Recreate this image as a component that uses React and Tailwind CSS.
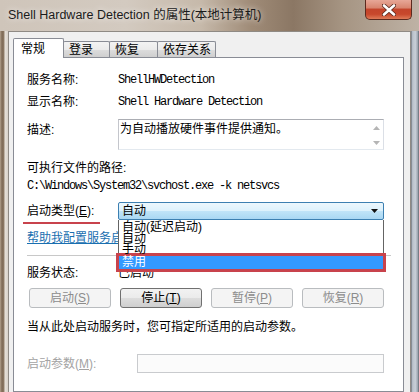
import React from "react";

const mono = "font-['Liberation_Mono',monospace] text-[12px] tracking-[-1.2px]";

const TABS = [
  { id: "general", label: "常规", w: "w-[51px]" },
  { id: "logon", label: "登录", w: "w-[47px]" },
  { id: "recovery", label: "恢复", w: "w-[49px]" },
  { id: "deps", label: "依存关系", w: "w-[59px]" },
];

const BUTTONS = [
  { label: "启动", key: "S", enabled: false },
  { label: "停止", key: "T", enabled: true },
  { label: "暂停", key: "P", enabled: false },
  { label: "恢复", key: "R", enabled: false },
];

function Tab({ tab, selected }) {
  if (selected) {
    return (
      <div className={`relative z-10 -mb-px flex h-[20px] ${tab.w} items-center rounded-t-[2px] border border-b-0 border-[#898c95] bg-white pl-[7px]`}>
        {tab.label}
      </div>
    );
  }
  return (
    <div className={`-ml-px flex h-[16px] ${tab.w} items-center rounded-t-[2px] border border-b-0 border-[#898c95] bg-[linear-gradient(#f3f3f3_0%,#ebebeb_50%,#dddddd_50%,#cfcfcf_100%)] pl-[5px]`}>
      {tab.label}
    </div>
  );
}

function Arrow({ up }) {
  return (
    <svg width="7" height="4" viewBox="0 0 7 4">
      <path d={up ? "M0 4 L3.5 0 L7 4 Z" : "M0 0 L7 0 L3.5 4 Z"} fill="#b5b5b5" />
    </svg>
  );
}

export default function App() {
  return (
    <div className="relative flex h-[392px] w-[419px] flex-col overflow-hidden bg-[#c9bdb0] font-['Liberation_Sans','Noto_Sans_CJK_SC',sans-serif] text-[12px] leading-[16px] text-black">
      {/* title bar */}
      <div className="flex h-[31px] shrink-0 items-start bg-[linear-gradient(90deg,#cfc5ba_0%,#d3cac0_30%,#c6b9aa_48%,#9f8b77_60%,#8b7764_70%,#a69583_82%,#beb2a5_100%)]">
        <div className="pl-[8px] pt-[7px] text-[12.5px] leading-[16px] text-[#1b1b1b] [text-shadow:0_0_6px_rgba(255,255,255,0.9)]">
          Shell Hardware Detection 的属性(本地计算机)
        </div>
        <div className="ml-auto mr-[7px] flex h-[20px] w-[47px] items-center justify-center rounded-b-[5px] border border-t-0 border-[#5b2a1f] bg-[linear-gradient(#e7a797_0%,#d98670_40%,#c4452b_50%,#c8482c_75%,#df7b58_100%)]">
          <svg width="14" height="12" viewBox="0 0 14 12">
            <path d="M2 1.5 L12 10.5 M12 1.5 L2 10.5" stroke="#5b2a1f" strokeWidth="4.2" strokeLinecap="round" />
            <path d="M2 1.5 L12 10.5 M12 1.5 L2 10.5" stroke="#ffffff" strokeWidth="2.6" strokeLinecap="round" />
          </svg>
        </div>
      </div>

      <div className="flex flex-1">
        {/* left frame */}
        <div className="w-[8px] bg-[linear-gradient(90deg,#b3a18c_0%,#7e6a56_25%,#8a7661_45%,#e6e0d8_65%,#d8d1c9_100%)]" />

        {/* client */}
        <div className="flex flex-1 flex-col border-x border-t border-[#8f8a84] bg-[#f0f0f0] pt-[6px]">
          <div className="ml-[4px] flex h-[19px] items-end">
            {TABS.map((t, i) => (
              <Tab key={t.id} tab={t} selected={i === 0} />
            ))}
          </div>

          <div className="ml-[4px] mr-[6px] flex-1 border border-[#898c95] bg-white pl-[13px]">
            <div className="mt-[11px] flex h-[22px] items-center">
              <span className="w-[91px]">服务名称:</span>
              <span className={mono}>ShellHWDetection</span>
            </div>
            <div className="flex h-[22px] items-center">
              <span className="w-[91px]">显示名称:</span>
              <span className={mono}>Shell Hardware Detection</span>
            </div>

            <div className="mt-[6px] flex">
              <span className="w-[91px] pt-[3px]">描述:</span>
              <div className="flex h-[31px] w-[266px] border border-[#abadb3] border-b-[#e3e9ef] border-l-[#c4c6cc] border-r-[#dbdfe6]">
                <div className="flex-1 pl-[1px] pt-px">为自动播放硬件事件提供通知。</div>
                <div className="flex w-[13px] flex-col items-center pt-[6px]">
                  <Arrow up />
                  <div className="h-[11px]" />
                  <Arrow />
                </div>
              </div>
            </div>

            <div className="mt-[9px] flex h-[18px] items-center">可执行文件的路径:</div>
            <div className={`flex h-[18px] items-center ${mono}`}>
              C:\Windows\System32\svchost.exe -k netsvcs
            </div>

            <div className="mt-[7px] flex h-[18px] items-center">
              <span className="relative w-[91px]">
                启动类型(<span className="underline">E</span>):
                <span className="absolute left-[-4px] top-[19px] h-[2px] w-[77px] bg-[#c8434c]" />
              </span>
              <div className="relative flex h-[18px] w-[266px] items-center rounded-[2px] border border-[#3c7fb1] bg-[linear-gradient(#ecf7fd_0%,#dcf1fc_50%,#c1e4f8_50%,#a9d7f3_100%)] pl-[3px]">
                <span className="flex-1">自动</span>
                <svg className="mr-[5px]" width="7" height="4" viewBox="0 0 7 4">
                  <path d="M0 0 L7 0 L3.5 4 Z" fill="#111" />
                </svg>

                {/* open list */}
                <div className="absolute left-[-1px] top-[17px] z-20 w-[266px] border-x border-b border-[#646464] bg-white pt-[2px] leading-[11px]">
                  <div className="h-[11px] pl-[3px]">自动(延迟启动)</div>
                  <div className="h-[11px] pl-[3px]">自动</div>
                  <div className="h-[11px] pl-[3px]">手动</div>
                  <div className="mt-px flex h-[13px] items-center bg-[#3399ff] pl-[3px] text-white shadow-[0_0_0_3px_#c8434c]">
                    禁用
                  </div>
                </div>
              </div>
            </div>

            <div className="mt-[9px] flex h-[18px] items-center">
              <span className="text-[#1a6fb0] underline">帮助我配置服务启动选项。</span>
            </div>

            <div className="mr-[12px] mt-[8px] h-px bg-[#c8c8c8]" />

            <div className="mt-[8px] flex h-[18px] items-center">
              <span className="w-[91px]">服务状态:</span>
              <span>已启动</span>
            </div>

            <div className="ml-[2px] mt-[6px] flex gap-[9px]">
              {BUTTONS.map((b) => (
                <div
                  key={b.key}
                  className={
                    b.enabled
                      ? "flex h-[20px] w-[82px] items-center justify-center rounded-[3px] border border-[#707070] bg-[linear-gradient(#f2f2f2_0%,#ebebeb_50%,#dddddd_50%,#cfcfcf_100%)]"
                      : "flex h-[20px] w-[82px] items-center justify-center rounded-[3px] border border-[#b9bcbf] bg-[#f4f4f4] text-[#8c8c8c]"
                  }
                >
                  {b.label}(<span className="underline">{b.key}</span>)
                </div>
              ))}
            </div>

            <div className="mt-[10px] flex h-[18px] items-center">
              当从此处启动服务时，您可指定所适用的启动参数。
            </div>

            <div className="mt-[18px] flex items-center text-[#a3a3a3]">
              <span className="w-[110px]">
                启动参数(<span className="underline">M</span>):
              </span>
              <div className="h-[19px] w-[247px] border border-[#c9cbce] bg-[#fbfbfb]" />
            </div>
          </div>
        </div>

        {/* right frame */}
        <div className="w-[8px] bg-[linear-gradient(90deg,#6f747b_0%,#b9c1cb_20%,#c8ced6_55%,#9aa3ae_85%,#5d6168_100%)]" />
      </div>
    </div>
  );
}
